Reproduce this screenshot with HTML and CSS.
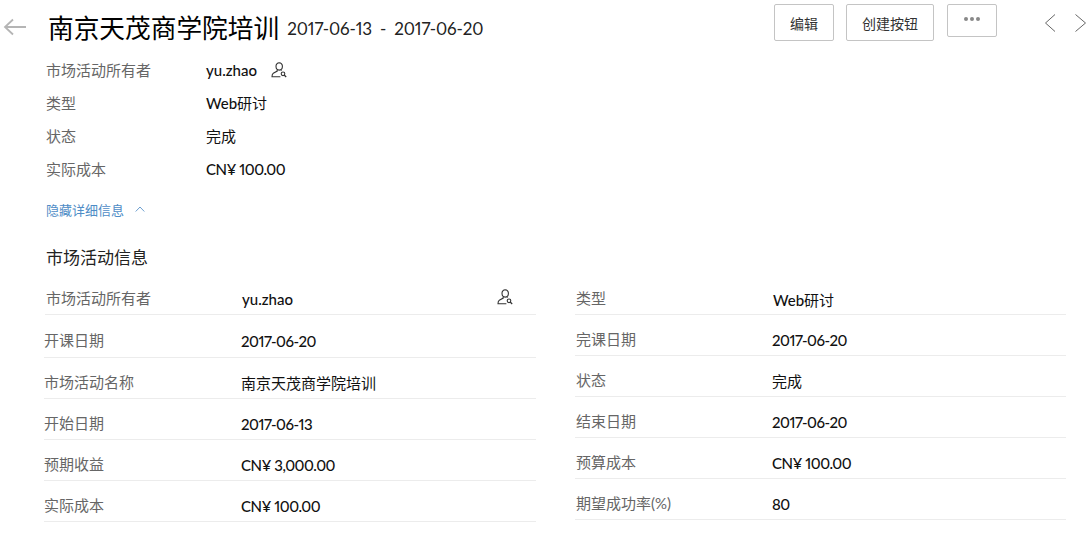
FILE: index.html
```html
<!DOCTYPE html>
<html lang="zh-CN">
<head>
<meta charset="utf-8">
<title>南京天茂商学院培训</title>
<link rel="stylesheet" href="styles.css">
</head>
<body>
<svg class="sprite" width="0" height="0" aria-hidden="true">
  <symbol id="owner" viewBox="0 0 16 16">
    <path d="M8.200 .8a3.300 3.300 0 0 1 3.200 3.500c0 2-1.300 3.800-3.200 3.800S5 6.300 5 4.300A3.300 3.300 0 0 1 8.200 .8z" fill="none" stroke="currentColor" stroke-width="1.100"/>
    <path d="M6.200 8v1.100L2.300 11.200c-.9.500-1.300 1.300-1.300 3.500h8.400M10.200 8v.7" fill="none" stroke="currentColor" stroke-width="1.100"/>
    <circle cx="12" cy="11.800" r="1.800" fill="none" stroke="currentColor" stroke-width="1.100"/>
    <path d="M13.200 13l2 2" fill="none" stroke="currentColor" stroke-width="1.200"/>
  </symbol>
</svg>
<header class="top">
  <svg class="back" width="24" height="18" viewBox="0 0 24 18"><path d="M23 9H2M10 1.500L2 9l8 7.500" fill="none" stroke="#b5b5b5" stroke-width="1.800"/></svg>
  <h1 class="title">南京天茂商学院培训</h1>
  <span class="dates">2017-06-13<span class="dash">-</span>2017-06-20</span>
  <div class="actions">
    <button class="btn btn-edit">编辑</button>
    <button class="btn btn-create">创建按钮</button>
    <button class="btn btn-more"><span class="dot"></span><span class="dot"></span><span class="dot"></span></button>
  </div>
  <nav class="pager">
    <svg width="12" height="20" viewBox="0 0 12 20"><path d="M11 1.500L1.500 10l9.500 8.500" fill="none" stroke="#666" stroke-width="1"/></svg>
    <svg width="12" height="20" viewBox="0 0 12 20"><path d="M1.500 1.500L11.500 10l-10 8.500" fill="none" stroke="#666" stroke-width="1"/></svg>
  </nav>
</header>

<section class="summary">
  <div class="sum-row"><span class="label sum-label">市场活动所有者</span><span class="value">yu.zhao</span><svg class="owner sum-owner"><use href="#owner"/></svg></div>
  <div class="sum-row"><span class="label sum-label">类型</span><span class="value">Web<span class="cjk">研讨</span></span></div>
  <div class="sum-row"><span class="label sum-label">状态</span><span class="value cjk">完成</span></div>
  <div class="sum-row"><span class="label sum-label">实际成本</span><span class="value num">CN¥ 100.00</span></div>
</section>

<a class="toggle">隐藏详细信息<svg width="10" height="6" viewBox="0 0 10 6"><path d="M.7 5.500L5 1l4.300 4.500" fill="none" stroke="#6d9fd0" stroke-width="1"/></svg></a>

<h2 class="heading">市场活动信息</h2>

<main class="detail">
  <div class="col col-left">
    <div class="row row-first"><span class="label">市场活动所有者</span><span class="value">yu.zhao</span><svg class="owner row-owner"><use href="#owner"/></svg></div>
    <div class="row row-tall"><span class="label">开课日期</span><span class="value num">2017-06-20</span></div>
    <div class="row"><span class="label">市场活动名称</span><span class="value cjk">南京天茂商学院培训</span></div>
    <div class="row"><span class="label">开始日期</span><span class="value num">2017-06-13</span></div>
    <div class="row"><span class="label">预期收益</span><span class="value num">CN¥ 3,000.00</span></div>
    <div class="row"><span class="label">实际成本</span><span class="value num">CN¥ 100.00</span></div>
  </div>
  <div class="col col-right">
    <div class="row row-first"><span class="label">类型</span><span class="value">Web<span class="cjk">研讨</span></span></div>
    <div class="row"><span class="label">完课日期</span><span class="value num">2017-06-20</span></div>
    <div class="row"><span class="label">状态</span><span class="value cjk">完成</span></div>
    <div class="row"><span class="label">结束日期</span><span class="value num">2017-06-20</span></div>
    <div class="row"><span class="label">预算成本</span><span class="value num">CN¥ 100.00</span></div>
    <div class="row"><span class="label">期望成功率(%)</span><span class="value num">80</span></div>
  </div>
</main>
</body>
</html>
```
FILE: styles.css
```css
* { box-sizing: border-box; }
html, body { margin: 0; height: 537px; overflow: hidden; background: #fff; }
body {
  font-family: Lato, "Noto Sans CJK SC", sans-serif;
  font-size: 15px;
  color: #111;
  font-variant-numeric: proportional-nums;
}
.sprite { display: block; }

.top {
  display: flex;
  align-items: flex-start;
  height: 53px;
  padding-left: 3px;
}
.back { margin-top: 18px; margin-right: 21px; flex: none; }
.title {
  margin: 11px 0 0;
  font-size: 25.7px;
  line-height: 34px;
  font-weight: 400;
  color: #000;
  white-space: nowrap;
}
.dates {
  margin: 17px 0 0 8px;
  font-size: 17px;
  letter-spacing: -0.12px;
  line-height: 24px;
  color: #222;
  white-space: nowrap;
}
.dash { margin: 0 8px; }
.actions {
  display: flex;
  gap: 12px;
  margin-left: auto;
  margin-top: 4px;
}
.btn {
  height: 37px;
  padding: 0;
  background: #fff;
  border: 1px solid #c4c4c4;
  border-radius: 2px;
  font: 14px "Noto Sans CJK SC", sans-serif;
  color: #333;
}
.btn-edit { width: 60px; }
.btn-create { width: 88px; }
.btn-more {
  width: 50px;
  height: 33px;
  margin-left: 1px;
  display: flex;
  align-items: center;
  justify-content: center;
  gap: 2px;
  padding-bottom: 4px;
}
.dot { width: 4px; height: 4px; border-radius: 50%; background: #888; }
.pager {
  display: flex;
  gap: 18px;
  margin: 13px 0 0 47px;
}

.summary { padding-left: 46px; }
.sum-row { display: flex; align-items: center; height: 33px; }
.label { color: #666; white-space: nowrap; }
.sum-label { width: 160px; }
.value { color: #111; white-space: nowrap; font-weight: 500; }
.value.cjk, .cjk { font-weight: 400; }
.num { letter-spacing: -0.5px; }
.owner { width: 16px; height: 16px; color: #333; flex: none; }
.sum-owner { margin-left: 14px; }

.toggle {
  display: flex;
  align-items: center;
  gap: 11px;
  margin: 14px 0 0 46px;
  height: 20px;
  font-size: 13px;
  color: #4e8cc6;
}

.heading {
  margin: 27px 0 0 46px;
  font-size: 17px;
  line-height: 24px;
  font-weight: 400;
  color: #222;
}

.detail {
  display: grid;
  grid-template-columns: 492px 491px;
  column-gap: 39px;
  margin: 8px 0 0 44px;
}
.row {
  display: flex;
  align-items: center;
  height: 41px;
  padding-top: 6px;
  border-bottom: 1px solid #ececec;
}
.row .value { padding-top: 4px; }
.row .value.cjk { padding-top: 2px; }
.row-first { height: 37px; padding-top: 2px; }
.row-tall { height: 43px; }
.row .label { width: 197px; flex: none; }
.col-left .row-first { margin-left: 1px; }
.col-left .row-first .label { padding-left: 1px; }
.col-right .label { padding-left: 1px; }
.col-right .row-first .label { width: 198px; }
.row-owner { margin-left: auto; margin-right: 23px; }
```
